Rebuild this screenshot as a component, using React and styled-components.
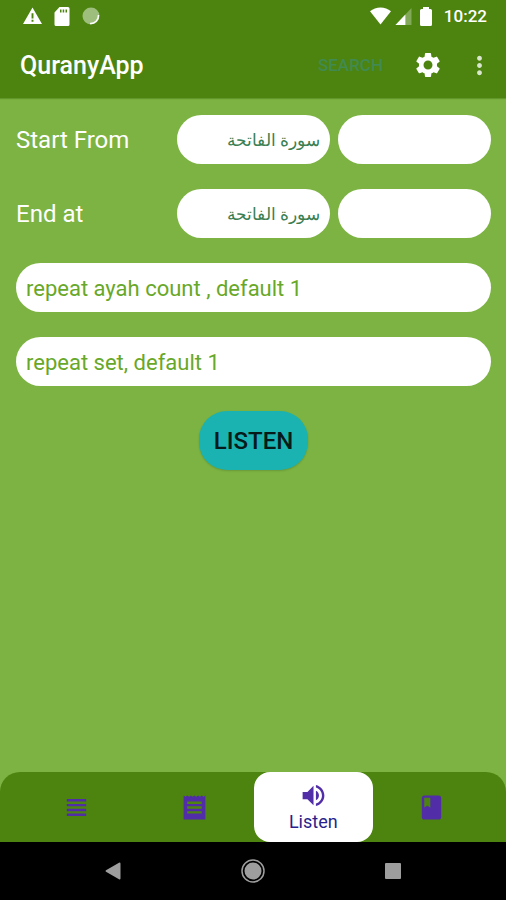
import React, { useState } from 'react'
import styled, { createGlobalStyle } from 'styled-components'
import {
  MdBook,
  MdMoreVert,
  MdSettings,
  MdViewHeadline,
  MdVolumeUp,
} from 'react-icons/md'

const colors = {
  primary: '#4c840f',
  background: '#7cb342',
  hint: '#68a828',
  surah: '#3a8052',
  search: '#418a52',
  accent: '#1ab3b1',
  tab: '#512da8',
  tabLabel: '#2a1f8c',
  system: '#9e9e9e',
}

const GlobalStyle = createGlobalStyle`
  * {
    box-sizing: border-box;
  }
  body {
    margin: 0;
    background: ${colors.background};
    font-family: Roboto, "Noto Sans", sans-serif;
  }
  button, input, select {
    margin: 0;
    font-family: inherit;
  }
`

const Screen = styled.div`
  display: flex;
  flex-direction: column;
  min-height: 100vh;
`

const Header = styled.header`
  background: ${colors.primary};
  color: white;
  box-shadow: 0 1px 1px rgba(60, 110, 10, 0.4);
`

const StatusBar = styled.div`
  display: flex;
  align-items: center;
  justify-content: space-between;
  height: 32px;
  padding: 0 19px 0 23px;
`

const StatusGroup = styled.div`
  display: flex;
  align-items: center;
  gap: ${(props) => props.$gap}px;
`

const Clock = styled.time`
  margin-left: 4px;
  font-size: 17px;
  font-weight: 500;
`

const Toolbar = styled.div`
  display: flex;
  align-items: center;
  height: 66px;
  padding: 0 12px 0 20px;
`

const Title = styled.h1`
  flex: 1;
  margin: 0;
  font-size: 25px;
  font-weight: 500;
`

const SearchButton = styled.button`
  padding: 0;
  border: none;
  background: none;
  color: ${colors.search};
  font-size: 17px;
  font-weight: 500;
  text-transform: uppercase;
  cursor: pointer;
`

const IconButton = styled.button`
  display: flex;
  margin-left: ${(props) => props.$space}px;
  padding: 0;
  border: none;
  background: none;
  color: white;
  font-size: ${(props) => props.$size}px;
  opacity: ${(props) => (props.$soft ? 0.8 : 1)};
  cursor: pointer;
`

const Form = styled.form`
  display: flex;
  flex: 1;
  flex-direction: column;
  gap: 25px;
  padding: 17px 15px 25px 16px;
`

const Row = styled.div`
  display: grid;
  grid-template-columns: 1fr 1fr 1fr;
  align-items: center;
  gap: 8px;
`

const Label = styled.label`
  color: white;
  font-size: 24px;
`

const Field = styled.input`
  width: 100%;
  height: 49px;
  padding: 2px 10px 0;
  border: none;
  border-radius: 25px;
  outline: none;
  background: white;
  color: ${colors.hint};
  font-size: 22px;
  &::placeholder {
    color: ${colors.hint};
    opacity: 1;
  }
`

const SurahSelect = styled.select`
  width: 100%;
  height: 49px;
  padding: 0 10px;
  border: none;
  border-radius: 25px;
  outline: none;
  appearance: none;
  background: white;
  color: ${colors.surah};
  font-size: 17px;
`

const ListenButton = styled.button`
  align-self: center;
  height: 59px;
  padding: 0 15px;
  border: none;
  border-radius: 28px;
  background: ${colors.accent};
  color: #061a1a;
  font-size: 24px;
  font-weight: 500;
  text-transform: uppercase;
  box-shadow: 0 1px 2px rgba(0, 0, 0, 0.15);
  cursor: pointer;
`

const Tabs = styled.nav`
  display: flex;
  height: 70px;
  padding: 0 15px 0 17px;
  border-radius: 20px 20px 0 0;
  background: ${colors.primary};
`

const Tab = styled.button`
  display: flex;
  flex: 1 1 0;
  flex-direction: column;
  align-items: center;
  justify-content: center;
  padding: 0;
  border: none;
  border-radius: 16px;
  background: ${(props) => (props.$active ? 'white' : 'none')};
  color: ${colors.tab};
  font-size: 29px;
  cursor: pointer;
`

const TabLabel = styled.span`
  color: ${colors.tabLabel};
  font-size: 18px;
  line-height: 24px;
`

const SystemBar = styled.div`
  display: flex;
  align-items: center;
  justify-content: space-between;
  height: 58px;
  padding: 0 101px;
  background: black;
`

const SystemButton = styled.button`
  display: flex;
  padding: 0;
  border: none;
  background: none;
`

const ReceiptIcon = () => (
  <svg width="1em" height="1em" viewBox="0 0 24 24" fill="currentColor">
    <path
      fillRule="evenodd"
      d="M3 2l1.500 1L6 2l1.500 1L9 2l1.500 1L12 2l1.500 1L15 2l1.500 1L18 2l1.500 1L21 2v20H3V2zM6 7v2h12V7H6zm0 4v2h12v-2H6zm0 4v2h12v-2H6z"
    />
  </svg>
)

const surahs = ['سورة الفاتحة', 'سورة البقرة', 'سورة آل عمران']

const tabs = [
  { name: 'Surahs', icon: <MdViewHeadline /> },
  { name: 'Pages', icon: <ReceiptIcon /> },
  { name: 'Listen', icon: <MdVolumeUp /> },
  { name: 'Bookmarks', icon: <MdBook /> },
]

const StatusIcons = () => (
  <StatusGroup $gap={12}>
    <svg width="19" height="18" viewBox="0 0 20 18" fill="white">
      <path fillRule="evenodd" d="M10 0L20 17.500H0L10 0zM9 6v5.500h2V6H9zm0 7v2h2v-2H9z" />
    </svg>
    <svg width="16" height="19" viewBox="0 0 16 19" fill="white">
      <path fillRule="evenodd" d="M5.500 0H14a1.500 1.500 0 0 1 1.500 1.500v16A1.500 1.500 0 0 1 14 19H2a1.500 1.500 0 0 1-1.500-1.500V5.500L5.500 0zM6 2.500v3h1.500v-3H6zm2.700 0v3h1.500v-3H8.700zm2.800 0v3H13v-3h-1.500z" />
    </svg>
    <svg width="18" height="18" viewBox="0 0 18 18">
      <circle cx="9" cy="9" r="8.500" fill="#9dbe7c" />
      <path d="M16.500 8A8 8 0 0 1 8 16.500" fill="none" stroke="white" strokeWidth="1.500" />
    </svg>
  </StatusGroup>
)

const SignalIcons = () => (
  <StatusGroup $gap={4}>
    <svg width="21" height="18" viewBox="0 0 22 18" fill="white">
      <path d="M11 18L0 4C6-1.300 16-1.300 22 4L11 18z" />
    </svg>
    <svg width="17" height="17" viewBox="0 0 17 18" fill="white">
      <path d="M17 0v18H0L17 0z" opacity="0.300" />
      <path d="M10.500 7v11H0L10.500 7z" />
    </svg>
    <svg width="20" height="19" viewBox="0 0 20 19" fill="white">
      <path d="M7 0h6v2h1.500A1.500 1.500 0 0 1 16 3.500v14a1.500 1.500 0 0 1-1.500 1.500h-9A1.500 1.500 0 0 1 4 17.500v-14A1.500 1.500 0 0 1 5.500 2H7V0z" />
    </svg>
    <Clock>10:22</Clock>
  </StatusGroup>
)

const RangeRow = ({ id, label }) => (
  <Row>
    <Label htmlFor={id}>{label}</Label>
    <SurahSelect id={id} dir="rtl">
      {surahs.map((surah) => (
        <option key={surah}>{surah}</option>
      ))}
    </SurahSelect>
    <Field aria-label={`${label} ayah`} inputMode="numeric" />
  </Row>
)

const App = () => {
  const [activeTab, setActiveTab] = useState('Listen')

  return (
    <Screen>
      <GlobalStyle />
      <Header>
        <StatusBar>
          <StatusIcons />
          <SignalIcons />
        </StatusBar>
        <Toolbar>
          <Title>QuranyApp</Title>
          <SearchButton>Search</SearchButton>
          <IconButton $space={30} $size={30} aria-label="Settings">
            <MdSettings />
          </IconButton>
          <IconButton $space={22} $size={29} $soft aria-label="More options">
            <MdMoreVert />
          </IconButton>
        </Toolbar>
      </Header>

      <Form onSubmit={(e) => e.preventDefault()}>
        <RangeRow id="start" label="Start From" />
        <RangeRow id="end" label="End at" />
        <Field aria-label="Repeat ayah count" placeholder="repeat ayah count , default 1" />
        <Field aria-label="Repeat set" placeholder="repeat set, default 1" />
        <ListenButton type="submit">Listen</ListenButton>
      </Form>

      <Tabs>
        {tabs.map(({ name, icon }) => (
          <Tab
            key={name}
            $active={name === activeTab}
            aria-label={name}
            onClick={() => setActiveTab(name)}
          >
            {icon}
            {name === activeTab && <TabLabel>{name}</TabLabel>}
          </Tab>
        ))}
      </Tabs>

      <SystemBar>
        <SystemButton aria-label="Back">
          <svg width="24" height="24" viewBox="0 0 24 24" fill={colors.system}>
            <path d="M19.500 4.500v15a1 1 0 0 1-1.500.700L5 12.800a1 1 0 0 1 0-1.600L18 3.800a1 1 0 0 1 1.500.700z" />
          </svg>
        </SystemButton>
        <SystemButton aria-label="Home">
          <svg width="24" height="24" viewBox="0 0 24 24" fill={colors.system}>
            <circle cx="12" cy="12" r="8.500" />
            <circle cx="12" cy="12" r="11" fill="none" stroke={colors.system} strokeWidth="1.500" />
          </svg>
        </SystemButton>
        <SystemButton aria-label="Recent apps">
          <svg width="24" height="24" viewBox="0 0 24 24" fill={colors.system}>
            <rect x="4" y="4" width="16" height="16" rx="1" />
          </svg>
        </SystemButton>
      </SystemBar>
    </Screen>
  )
}

export default App
